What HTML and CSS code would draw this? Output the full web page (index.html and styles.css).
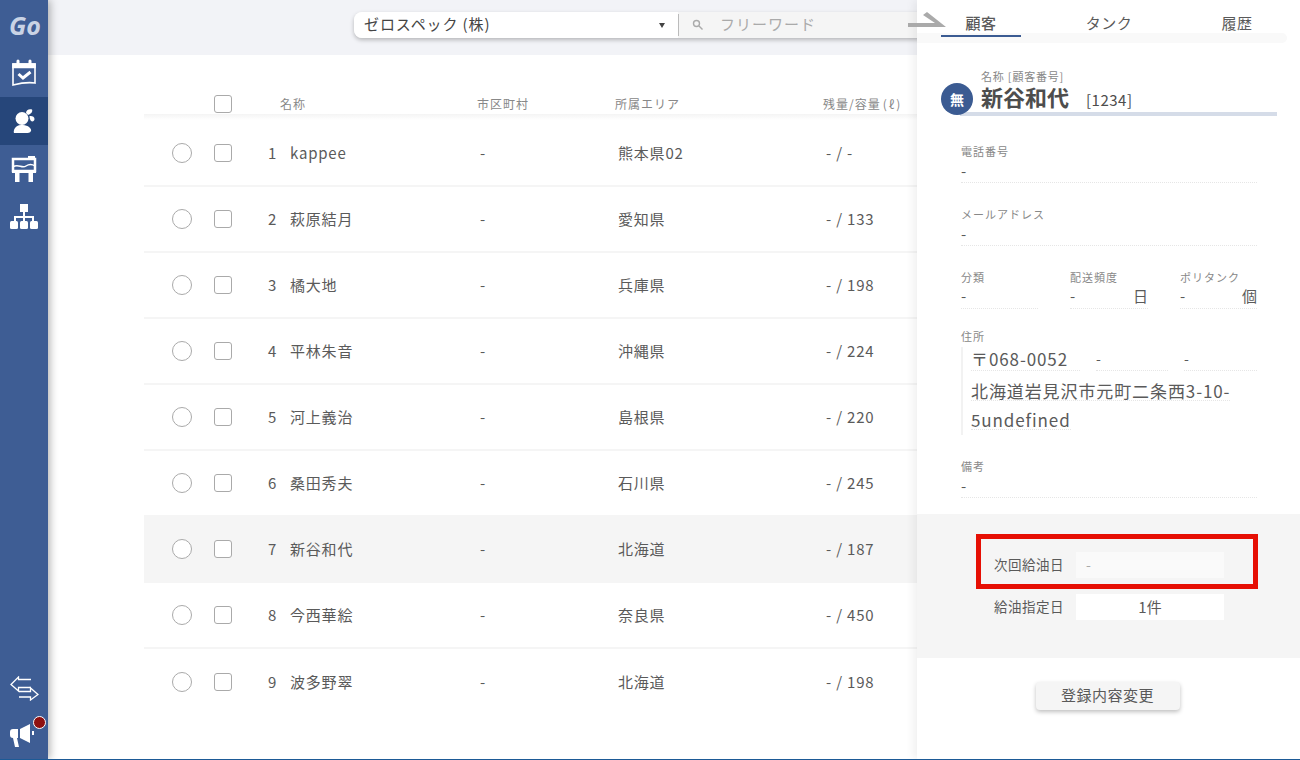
FILE: index.html
```html
<!DOCTYPE html>
<html>
<head lang="ja">
    <meta charset="UTF-8">
    <title>顧客一覧</title>
    <link rel="stylesheet" href="styles.css">
</head>
<body>
<div class="shell">
    <nav class="side">
        <div class="logo">Go</div>
        <a class="nav-item">
            <svg width="26" height="28" viewBox="0 0 26 28" fill="none" stroke="#fff" stroke-width="1.6"><path d="M2 5h22v19c-7-1-14 0-22 2z"/><path d="M2 5h22v3.500H2z" fill="#fff"/><path d="M7 2v4M19 2v4" stroke-width="3" stroke-linecap="round"/><path d="M7.500 15l4.500 4 7.500-6" stroke-width="3"/></svg>
        </a>
        <a class="nav-item active">
            <svg width="26" height="26" viewBox="0 0 26 26" fill="#fff"><circle cx="11" cy="10.500" r="6.500"/><path d="M3 25c-1-2 1-8 7-8h2c5 0 9 4 8 6-1 2-3 2-5 2z"/><path d="M15 5c0-3 3-4.500 6-3.500 1 2-1 4.500-4 5.500z"/><path d="M18.500 8c2.500-.5 5 .5 5 3 0 2-2 3-3.500 2-1-1-1.500-3-1.500-5z"/></svg>
        </a>
        <a class="nav-item">
            <svg width="26" height="26" viewBox="0 0 26 26" fill="none" stroke="#fff" stroke-width="2.500"><path d="M2 3h22v12H2z"/><path d="M2 11c5-4 9 2 13-1 3-2 6-2 9 0" stroke-width="1.500"/><path d="M17 0h7v4h-7z" fill="#fff" stroke="none"/><path d="M1 14h24v3H1z" fill="#fff" stroke="none"/><path d="M4 17h4.500v9H4zM17.500 17H22v9h-4.500z" fill="#fff" stroke="none"/></svg>
        </a>
        <a class="nav-item">
            <svg width="28" height="26" viewBox="0 0 28 26" fill="#fff"><path d="M10 0h8v8h-8zM13 8h2v5h-2z"/><path d="M4 12h20v5h-2v-3H6v3H4z"/><rect x="0" y="17" width="8" height="8" rx="1.500"/><rect x="10" y="17" width="8" height="8" rx="1.500"/><rect x="20" y="17" width="8" height="8" rx="1.500"/><path d="M13 13h2v4h-2z"/></svg>
        </a>
        <div class="side-bottom">
            <svg class="swap" width="29" height="25" viewBox="0 0 29 25" fill="none" stroke="#fff" stroke-width="1.300"><path d="M21 3.500H8.500V1L1 8.500 8.500 15v-3.500H21"/><path d="M9 15.500h11.500V12l7.500 6.500-7.500 5.500v-3H9"/></svg>
            <div class="horn">
                <svg width="26" height="24" viewBox="0 0 26 24" fill="#fff"><path d="M0 9c0-2 1-3 3-3h5v9h-1l2 9H5L3 15c-2 0-3-1-3-3z"/><path d="M10 6l10-5v19l-10-5z"/><path d="M22 8h2v4h-2z"/></svg>
                <span class="dot"></span>
            </div>
        </div>
    </nav>

    <div class="content">
        <div class="topbar">
            <div class="searchbox">
                <div class="company">ゼロスペック (株)<span class="caret"></span></div>
                <div class="freeword">
                    <svg width="11" height="11" viewBox="0 0 11 11" fill="none" stroke="#aaa" stroke-width="1.400"><circle cx="4.500" cy="4.500" r="3"/><path d="M7 7l3.500 3.500"/></svg>
                    <span>フリーワード</span>
                </div>
            </div>
        </div>
        <div class="list">
            <div class="list-head">
                <span></span>
                <span class="check"></span>
                <span>名称</span>
                <span>市区町村</span>
                <span>所属エリア</span>
                <span>残量/容量<i class="unit">(ℓ)</i></span>
            </div>
            <div class="row"><span class="radio"></span><span class="check"></span><span>1</span><span>kappee</span><span>-</span><span>熊本県02</span><span>- / -</span></div>
            <div class="row"><span class="radio"></span><span class="check"></span><span>2</span><span>萩原結月</span><span>-</span><span>愛知県</span><span>- / 133</span></div>
            <div class="row"><span class="radio"></span><span class="check"></span><span>3</span><span>橘大地</span><span>-</span><span>兵庫県</span><span>- / 198</span></div>
            <div class="row"><span class="radio"></span><span class="check"></span><span>4</span><span>平林朱音</span><span>-</span><span>沖縄県</span><span>- / 224</span></div>
            <div class="row"><span class="radio"></span><span class="check"></span><span>5</span><span>河上義治</span><span>-</span><span>島根県</span><span>- / 220</span></div>
            <div class="row"><span class="radio"></span><span class="check"></span><span>6</span><span>桑田秀夫</span><span>-</span><span>石川県</span><span>- / 245</span></div>
            <div class="row selected"><span class="radio"></span><span class="check"></span><span>7</span><span>新谷和代</span><span>-</span><span>北海道</span><span>- / 187</span></div>
            <div class="row"><span class="radio"></span><span class="check"></span><span>8</span><span>今西華絵</span><span>-</span><span>奈良県</span><span>- / 450</span></div>
            <div class="row"><span class="radio"></span><span class="check"></span><span>9</span><span>波多野翠</span><span>-</span><span>北海道</span><span>- / 198</span></div>
        </div>
    </div>

    <aside class="panel">
        <svg class="close-arrow" width="38" height="16" viewBox="0 0 38 16" fill="#aaa"><path d="M0 11h27L15 3l4-3 19 15H0z"/></svg>
        <div class="tabs">
            <div class="tab current">顧客</div>
            <div class="tab">タンク</div>
            <div class="tab">履歴</div>
        </div>
        <div class="customer">
            <div class="badge">無</div>
            <div class="customer-label">名称 [顧客番号]</div>
            <div class="customer-name">新谷和代<span>[1234]</span></div>
        </div>
        <div class="fields">
            <div class="field">
                <label>電話番号</label>
                <div class="value">-</div>
            </div>
            <div class="field">
                <label>メールアドレス</label>
                <div class="value">-</div>
            </div>
            <div class="field-row">
                <div class="field">
                    <label>分類</label>
                    <div class="value">-</div>
                </div>
                <div class="field">
                    <label>配送頻度</label>
                    <div class="value">-<em>日</em></div>
                </div>
                <div class="field">
                    <label>ポリタンク</label>
                    <div class="value">-<em>個</em></div>
                </div>
            </div>
            <div class="field address">
                <label>住所</label>
                <div class="address-body">
                    <div class="address-top">
                        <span class="zip">〒068-0052</span>
                        <span class="pref">-</span>
                        <span class="city">-</span>
                    </div>
                    <div class="address-line"><span>北海道岩見沢市元町二条西3-10-</span></div>
                    <div class="address-line"><span>5undefined</span></div>
                </div>
            </div>
            <div class="field note">
                <label>備考</label>
                <div class="value">-</div>
            </div>
        </div>
        <div class="refuel">
            <div class="refuel-row">
                <label>次回給油日</label>
                <div class="refuel-box empty">-</div>
            </div>
            <div class="refuel-row">
                <label>給油指定日</label>
                <div class="refuel-box">1件</div>
            </div>
            <div class="highlight"></div>
        </div>
        <div class="actions">
            <button class="edit-btn">登録内容変更</button>
        </div>
    </aside>
</div>
</body>
</html>
```

FILE: styles.css
```css
*{
    padding:0;
    margin:0;
    box-sizing:border-box;
}
body{
    font-family:"Noto Sans CJK JP","Noto Sans",sans-serif;
    color:#5a5a5a;
    background:#fff;
    overflow:hidden;
}
.shell{
    width:1300px;
    height:760px;
    display:flex;
    position:relative;
    overflow:hidden;
    border-bottom:1px solid #1d5a96;
}

/* side menu */
.side{
    width:48px;
    flex:none;
    background:#3e5d94;
    box-shadow:2px 0 8px rgba(0,0,0,.3);
    display:flex;
    flex-direction:column;
    position:relative;
    z-index:2;
}
.logo{
    height:49px;
    padding:9px 0 0 9px;
    font:italic bold 25px/32px "Open Sans",sans-serif;
    color:#c9d3e5;
}
.nav-item{
    height:48px;
    display:flex;
    align-items:center;
    justify-content:center;
}
.nav-item.active{
    background:#26467a;
}
.side-bottom{
    margin-top:auto;
    display:flex;
    flex-direction:column;
    align-items:center;
    padding-bottom:12px;
    gap:22px;
}
.horn{
    position:relative;
    height:24px;
    margin-left:-2px;
}
.dot{
    position:absolute;
    top:-7px;
    right:-10px;
    width:13px;
    height:13px;
    border-radius:50%;
    background:#8e1010;
    border:1px solid #fff;
}

/* top bar */
.content{
    flex:1;
    min-width:0;
    overflow:hidden;
}
.topbar{
    height:55px;
    background:#f2f3f7;
    padding:12px 0 0 306px;
}
.searchbox{
    width:640px;
    height:26px;
    display:flex;
    background:#f5f5f5;
    border-radius:8px;
    box-shadow:0 2px 4px rgba(0,0,0,.25);
}
.company{
    width:324px;
    background:#fff;
    border-radius:8px 0 0 8px;
    padding:0 12px 2px 10px;
    font-size:15px;
    line-height:24px;
    letter-spacing:.9px;
    color:#444;
    display:flex;
    justify-content:space-between;
    align-items:center;
}
.caret{
    width:0;
    height:0;
    border-left:3px solid transparent;
    border-right:3px solid transparent;
    border-top:5px solid #444;
    margin:2px 1px 0 0;
}
.freeword{
    flex:1;
    position:relative;
    display:flex;
    align-items:center;
    gap:17px;
    padding:0 0 2px 14px;
    font-size:15px;
    line-height:24px;
    letter-spacing:1px;
    color:#aaa;
}
.freeword::before{
    content:"";
    position:absolute;
    left:0;
    top:2px;
    height:22px;
    border-left:1px solid #bbb;
}

/* list */
.list{
    margin:33px 0 0 96px;
    width:773px;
}
.list-head,.row{
    display:grid;
    align-items:center;
}
.list-head{
    grid-template-columns:70px 66px 197px 138px 208px 1fr;
    height:33px;
    padding-bottom:1px;
    font-size:12px;
    color:#888;
    letter-spacing:1px;
    background:linear-gradient(#f4f4f4,#fff) 0 26px/100% 6px no-repeat;
}
.list-head span{
    margin-bottom:2px;
}
.list-head .check{
    margin-bottom:0;
}
.unit{
    font-style:normal;
    letter-spacing:2px;
    margin-left:2px;
}
.row{
    grid-template-columns:42px 54px 22px 190px 138px 208px 1fr;
    height:66px;
    padding-left:28px;
    font-size:15px;
    letter-spacing:.8px;
    color:#5a5a5a;
    border-bottom:2px solid #f5f5f5;
}
.row span{
    margin-bottom:2px;
}
.row .radio,.row .check{
    margin-bottom:0;
}
.row:last-child{
    border-bottom:0;
}
.row.selected{
    background:#f5f5f5;
}
.radio{
    width:20px;
    height:20px;
    border:1px solid #aaa;
    border-radius:50%;
    background:#fff;
}
.check{
    display:block;
    width:18px;
    height:18px;
    border:1px solid #aaa;
    border-radius:3px;
    background:#fff;
}

/* right panel */
.panel{
    width:383px;
    flex:none;
    background:#fff;
    box-shadow:-4px 0 8px rgba(0,0,0,.06);
    position:relative;
    z-index:1;
}
.close-arrow{
    position:absolute;
    top:12px;
    left:-9px;
}
.tabs{
    height:37px;
    padding-left:24px;
    display:flex;
    gap:48px;
    position:relative;
}
.tabs::after{
    content:"";
    position:absolute;
    left:0;
    top:33px;
    width:370px;
    height:10px;
    background:#f9f9f9;
    border-radius:0 5px 5px 0;
}
.tab{
    width:80px;
    height:37px;
    padding-top:11px;
    text-align:center;
    font-size:15px;
    line-height:24px;
    letter-spacing:.5px;
    position:relative;
    z-index:1;
}
.tab.current{
    border-bottom:2px solid #3b5b92;
    font-weight:500;
}
.customer{
    margin:31px 23px 0 43px;
    height:48px;
    border-bottom:4px solid #d5dce8;
    padding-left:21px;
    position:relative;
}
.badge{
    position:absolute;
    left:-19px;
    top:15px;
    width:32px;
    height:32px;
    border-radius:50%;
    background:#3b5b92;
    color:#fff;
    font-size:14px;
    font-weight:700;
    line-height:32px;
    text-align:center;
}
.customer-label{
    font-size:11px;
    line-height:16px;
    color:#888;
    letter-spacing:.8px;
}
.customer-name{
    font-size:22px;
    font-weight:700;
    line-height:24px;
    color:#4d4d4d;
}
.customer-name span{
    font-size:15px;
    font-weight:400;
    margin-left:17px;
    letter-spacing:.5px;
}
.fields{
    padding:27px 43px 0 44px;
}
.field{
    margin-bottom:23px;
}
.field label{
    display:block;
    font-size:11px;
    line-height:16px;
    color:#888;
    letter-spacing:1px;
    white-space:nowrap;
}
.value{
    height:23px;
    margin-top:1px;
    font-size:15px;
    line-height:21px;
    border-bottom:1px dotted #e6e6e6;
    display:flex;
    justify-content:space-between;
}
.value em{
    font-style:normal;
}
.field-row{
    display:grid;
    grid-template-columns:77px 78px 77px;
    gap:32px;
}
.field-row .field{
    margin-bottom:19px;
}
.field-row .value{
    line-height:20px;
}
.address{
    margin-bottom:23px;
}
.address-body{
    border-left:2px solid #f2f2f2;
    padding-left:8px;
    height:88px;
    margin-top:3px;
    font-size:17px;
    letter-spacing:.9px;
}
.address-top{
    display:grid;
    grid-template-columns:109px 72px 73px;
    gap:16px;
    height:23px;
    line-height:23px;
}
.address-top span{
    border-bottom:1px dotted #e6e6e6;
}
.address-top .pref,.address-top .city{
    font-size:14px;
}
.address-line{
    display:flex;
    padding-top:9px;
}
.address-top + .address-line{
    padding-top:11px;
}
.address-line span{
    height:20px;
    line-height:20px;
    border-bottom:1px dotted #e6e6e6;
}
.note{
    margin-bottom:0;
}
.refuel{
    position:relative;
    margin-top:16px;
    height:144px;
    background:#f5f5f5;
    padding-top:38px;
    display:flex;
    flex-direction:column;
    gap:16px;
}
.refuel-row{
    display:flex;
    align-items:center;
    padding-left:77px;
}
.refuel-row label{
    width:82px;
    font-size:13.500px;
    letter-spacing:.5px;
    margin-bottom:2px;
}
.refuel-box{
    width:148px;
    height:26px;
    background:#fff;
    font-size:15px;
    line-height:25px;
    text-align:center;
}
.refuel-box.empty{
    background:#fafafa;
    color:#aaa;
    text-align:left;
    padding-left:10px;
    font-size:14px;
}
.highlight{
    position:absolute;
    left:59px;
    top:20px;
    width:282px;
    height:55px;
    border:5px solid #e60f04;
}
.actions{
    padding-top:24px;
    display:flex;
    justify-content:center;
    padding-right:2px;
}
.edit-btn{
    width:144px;
    height:28px;
    padding-bottom:3px;
    font-family:inherit;
    font-size:15px;
    letter-spacing:.5px;
    color:#5a5a5a;
    background:#f5f5f5;
    border:0;
    border-radius:4px;
    box-shadow:0 2px 4px rgba(0,0,0,.25);
}
```
